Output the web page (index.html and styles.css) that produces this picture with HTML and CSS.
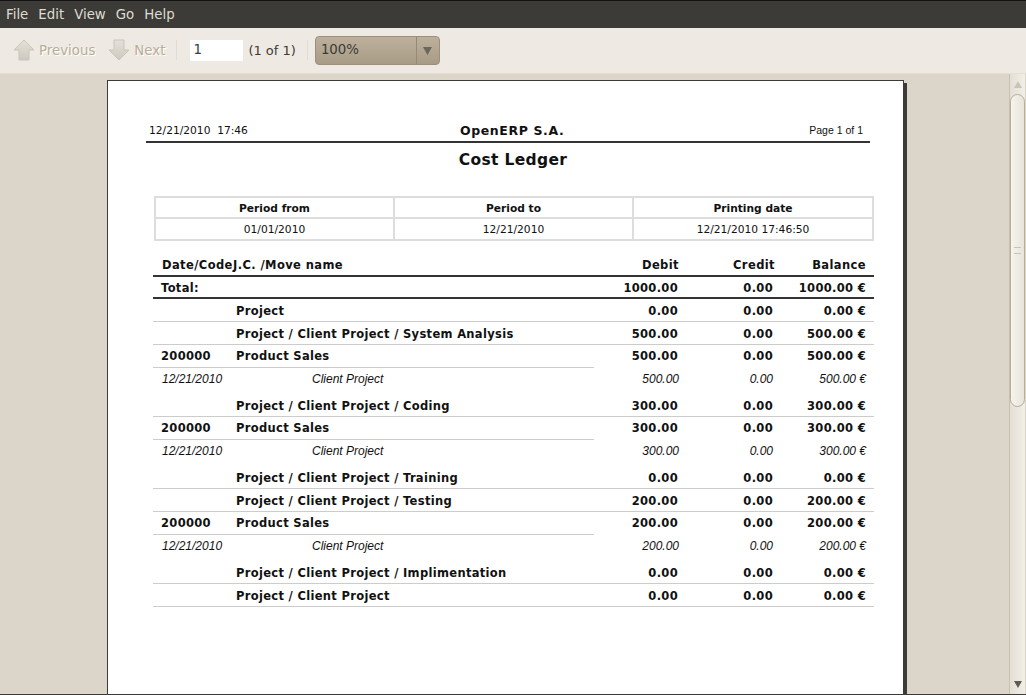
FILE: index.html
```html
<!DOCTYPE html>
<html lang="en">
<head>
  <meta charset="UTF-8">
  <title>Cost Ledger</title>
  <link rel="stylesheet" href="styles.css">
</head>
<body>

  <div class="menubar">
    <span>File</span>
    <span>Edit</span>
    <span>View</span>
    <span>Go</span>
    <span>Help</span>
  </div>

  <div class="toolbar">
    <span class="tool tool-prev">
      <svg width="22" height="22" viewBox="0 0 22 22">
        <defs>
          <linearGradient id="arrowFill" x1="0" y1="0" x2="0" y2="1">
            <stop offset="0" stop-color="#e4e1da"/>
            <stop offset="1" stop-color="#cdc9c0"/>
          </linearGradient>
        </defs>
        <path d="M11 1 L21 11 L16 11 L16 21 L6 21 L6 11 L1 11 Z" fill="url(#arrowFill)" stroke="#c9c5bb" stroke-linejoin="round"/>
      </svg>
      Previous
    </span>
    <span class="tool tool-next">
      <svg width="22" height="22" viewBox="0 0 22 22"><path d="M6 1 L16 1 L16 11 L21 11 L11 21 L1 11 L6 11 Z" fill="url(#arrowFill)" stroke="#c9c5bb" stroke-linejoin="round"/></svg>
      Next
    </span>
    <span class="sep sep-first"></span>
    <span class="page-box">1</span>
    <span class="page-count">(1 of 1)</span>
    <span class="sep sep-second"></span>
    <div class="zoom-box">
      <span class="zoom-value">100%</span>
      <span class="zoom-arrow"><svg width="9" height="9" viewBox="0 0 9 9"><path d="M0 1 H9 L4.5 9 Z" fill="#6b675c"/></svg></span>
    </div>
  </div>

  <div class="viewer">
    <div class="doc-area">
      <div class="page">
        <div class="report-head">
          <span class="head-date">12/21/2010&nbsp; 17:46</span>
          <span class="head-company">OpenERP S.A.</span>
          <span class="head-page">Page 1 of 1</span>
        </div>
        <h1 class="title">Cost Ledger</h1>

        <table class="info">
          <tr><th>Period from</th><th>Period to</th><th>Printing date</th></tr>
          <tr><td>01/01/2010</td><td>12/21/2010</td><td>12/21/2010 17:46:50</td></tr>
        </table>

        <div class="ledger" id="ledger">
          <div class="row row-head"><span class="c-code">Date/Code</span><span class="c-name">J.C. /Move name</span><span class="num">Debit</span><span class="num">Credit</span><span class="num">Balance</span></div>
          <div class="row row-total"><span class="c-code">Total:</span><span class="c-name"></span><span class="num">1000.00</span><span class="num">0.00</span><span class="num">1000.00 €</span></div>
          <div class="row row-acc"><span class="c-code"></span><span class="c-name">Project</span><span class="num">0.00</span><span class="num">0.00</span><span class="num">0.00 €</span></div>
          <div class="row row-acc"><span class="c-code"></span><span class="c-name">Project / Client Project / System Analysis</span><span class="num">500.00</span><span class="num">0.00</span><span class="num">500.00 €</span></div>
          <div class="row row-sales"><span class="c-code">200000</span><span class="c-name">Product Sales</span><span class="num">500.00</span><span class="num">0.00</span><span class="num">500.00 €</span></div>
          <div class="row row-move"><span class="c-code">12/21/2010</span><span class="c-name">Client Project</span><span class="num">500.00</span><span class="num">0.00</span><span class="num">500.00 €</span></div>
          <div class="row row-acc"><span class="c-code"></span><span class="c-name">Project / Client Project / Coding</span><span class="num">300.00</span><span class="num">0.00</span><span class="num">300.00 €</span></div>
          <div class="row row-sales"><span class="c-code">200000</span><span class="c-name">Product Sales</span><span class="num">300.00</span><span class="num">0.00</span><span class="num">300.00 €</span></div>
          <div class="row row-move"><span class="c-code">12/21/2010</span><span class="c-name">Client Project</span><span class="num">300.00</span><span class="num">0.00</span><span class="num">300.00 €</span></div>
          <div class="row row-acc"><span class="c-code"></span><span class="c-name">Project / Client Project / Training</span><span class="num">0.00</span><span class="num">0.00</span><span class="num">0.00 €</span></div>
          <div class="row row-acc"><span class="c-code"></span><span class="c-name">Project / Client Project / Testing</span><span class="num">200.00</span><span class="num">0.00</span><span class="num">200.00 €</span></div>
          <div class="row row-sales"><span class="c-code">200000</span><span class="c-name">Product Sales</span><span class="num">200.00</span><span class="num">0.00</span><span class="num">200.00 €</span></div>
          <div class="row row-move"><span class="c-code">12/21/2010</span><span class="c-name">Client Project</span><span class="num">200.00</span><span class="num">0.00</span><span class="num">200.00 €</span></div>
          <div class="row row-acc"><span class="c-code"></span><span class="c-name">Project / Client Project / Implimentation</span><span class="num">0.00</span><span class="num">0.00</span><span class="num">0.00 €</span></div>
          <div class="row row-acc"><span class="c-code"></span><span class="c-name">Project / Client Project</span><span class="num">0.00</span><span class="num">0.00</span><span class="num">0.00 €</span></div>
        </div>
      </div>
    </div>
    <div class="scrollbar">
      <span class="scroll-arrow"><svg width="8" height="7" viewBox="0 0 8 7"><path d="M4 0 L8 7 H0 Z" fill="#c9c4b8"/></svg></span>
      <div class="scroll-track">
        <div class="scroll-thumb"><span class="grip"></span></div>
      </div>
      <span class="scroll-arrow"><svg width="8" height="7" viewBox="0 0 8 7"><path d="M0 0 H8 L4 7 Z" fill="#5f5b50"/></svg></span>
    </div>
  </div>

</body>
</html>
```

FILE: styles.css
```css
* {
  box-sizing: border-box;
}

html, body {
  height: 100%;
}

body {
  margin: 0;
  display: flex;
  flex-direction: column;
  overflow: hidden;
  font-family: "DejaVu Sans", sans-serif;
  background-color: #dcd5c9;
  border-top: 1px solid #111;
  border-bottom: 1px solid #3c3b37;
}

.menubar {
  height: 27px;
  flex: none;
  display: flex;
  align-items: center;
  gap: 10px;
  padding: 0 6px 1px;
  background-color: #3c3b37;
  color: #dfdbd2;
  font-size: 13.33px;
}

.toolbar {
  height: 46px;
  flex: none;
  display: flex;
  align-items: center;
  padding: 0 0 1px 13px;
  background-color: #eeeae3;
  border-bottom: 1px solid #e5dfd3;
  font-size: 13.33px;
  color: #3c3b37;
}

.tool {
  display: flex;
  align-items: center;
  gap: 4px;
  color: #b9ad97;
  text-shadow: 1px 1px 0 #fff;
}

.tool-next {
  margin-left: 13px;
}

.sep {
  width: 1px;
  height: 20px;
  background-color: #e0dcd2;
}

.sep-first {
  margin: 0 13px 0 11px;
}

.sep-second {
  margin: 0 7px 0 11px;
}

.page-box {
  width: 53px;
  height: 21px;
  padding: 1px 3px;
  background-color: #fff;
  line-height: 18px;
}

.page-count {
  margin-left: 5px;
  font-size: 13px;
}

.zoom-box {
  width: 125px;
  height: 29px;
  display: flex;
  border: 1px solid #9c907a;
  border-radius: 4px;
  background: linear-gradient(#bcb09c, #a99c86);
}

.zoom-value {
  flex: 1;
  padding: 0 5px;
  line-height: 26px;
}

.zoom-arrow {
  width: 23px;
  display: flex;
  align-items: center;
  justify-content: center;
  border-left: 1px solid #94897a;
}

.viewer {
  flex: 1;
  display: flex;
  min-height: 0;
}

.doc-area {
  flex: 1;
  padding: 6px 0 0 107px;
  overflow: hidden;
}

.page {
  width: 797px;
  height: 640px;
  padding: 40px 30px 0 38px;
  background-color: #fff;
  border: 1px solid #3c3b37;
  box-shadow: 3px 3px 0 #3c3b37;
}

.report-head {
  display: grid;
  grid-template-columns: 311px auto 1fr;
  align-items: center;
  width: 724px;
  height: 22px;
  padding: 0 7px 2px 3px;
  border-bottom: 2px solid #333;
  font-size: 10.67px;
  color: #111;
}

.head-company {
  font-weight: bold;
  font-size: 12.5px;
  letter-spacing: 0.6px;
}

.head-page {
  text-align: right;
  font-family: "Liberation Sans", sans-serif;
  font-size: 10.5px;
}

.title {
  width: 724px;
  margin: 8px 0 0;
  padding-left: 10px;
  text-align: center;
  font-size: 15.5px;
  line-height: 18px;
  letter-spacing: 0.35px;
  color: #111;
}

.info {
  width: 720px;
  margin: 27px 0 0 8px;
  border-collapse: collapse;
  table-layout: fixed;
  font-size: 10.67px;
  color: #111;
}

.info th, .info td {
  height: 22px;
  padding: 0;
  border: 2px solid #ddd;
  text-align: center;
}

.info th {
  height: 21px;
  padding-top: 2px;
}

.info th:nth-child(1) {
  width: 239px;
}

.info th:nth-child(2) {
  width: 239px;
}

.ledger {
  width: 721px;
  margin: 13px 0 0 7px;
  font-size: 11.5px;
  color: #111;
}

.row {
  display: grid;
  grid-template-columns: 83px 358px 84px 95px 93px;
  align-items: center;
  height: 23px;
  border-bottom: 1px solid #ccc;
  font-weight: bold;
  letter-spacing: 0.32px;
}

.num {
  text-align: right;
}

.c-code {
  padding-left: 8px;
}

.row-head {
  height: 23px;
  grid-template-columns: 80px 361px 85px 96px 91px;
  border-bottom: 2px solid #333;
  letter-spacing: 0.4px;
}

.row-head .c-code {
  padding-left: 9px;
  white-space: nowrap;
}

.row-total {
  height: 22px;
  padding-top: 1px;
  border-bottom: 2px solid #333;
}

.row-acc {
  padding-top: 2px;
}

.row-sales {
  padding-bottom: 1px;
  border-bottom: 0;
  background: linear-gradient(#ccc, #ccc) 0 100% / 441px 1px no-repeat;
}

.row-move {
  grid-template-columns: 83px 358px 85px 94px 93px;
  height: 26px;
  padding-bottom: 4px;
  border-bottom: 0;
  font-family: "Liberation Sans", sans-serif;
  font-size: 12px;
  font-style: italic;
  font-weight: normal;
  letter-spacing: 0;
}

.row-move .c-code {
  padding-left: 9px;
}

.row-move .c-name {
  padding-left: 76px;
}

.scrollbar {
  width: 16px;
  margin-right: 1px;
  flex: none;
  display: flex;
  flex-direction: column;
  border-left: 1px solid #c9c0ae;
  background: linear-gradient(90deg, #e4dfd5, #f2efe8);
}

.scroll-arrow {
  height: 20px;
  flex: none;
  display: flex;
  align-items: center;
  justify-content: center;
}

.scroll-track {
  flex: 1;
}

.scroll-thumb {
  height: 313px;
  display: flex;
  align-items: center;
  justify-content: center;
  border: 1px solid #b8ad97;
  border-radius: 8px;
  background: linear-gradient(90deg, #f6f4ef, #e8e4da);
}

.grip {
  width: 7px;
  height: 7px;
  border-top: 1px solid #c9c4b8;
  border-bottom: 1px solid #c9c4b8;
}
```
